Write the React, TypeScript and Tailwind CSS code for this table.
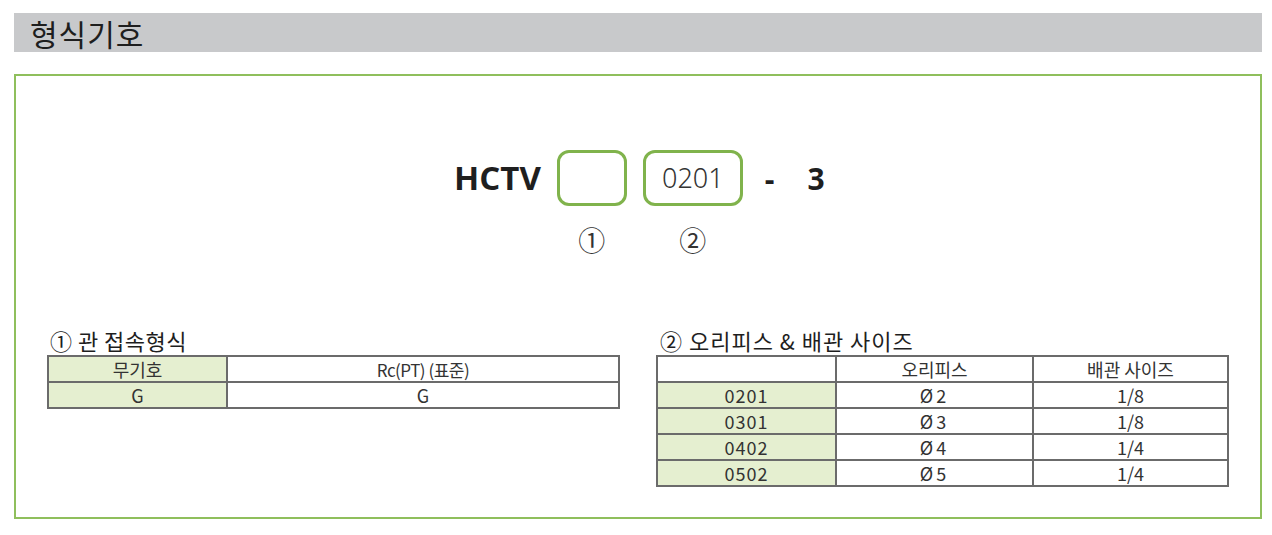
import React from "react";

const kr = { fontFamily: '"Noto Sans CJK KR", "Noto Sans", sans-serif' };

function Cell({ children, green, w, last }: { children: React.ReactNode; green?: boolean; w: string; last?: boolean }) {
  return (
    <div
      className={`${w} h-[26px] flex items-center justify-center border-b-2 ${last ? "" : "border-r-2"} border-[#6b6b6b] text-[18px] leading-none text-[#333] ${green ? "bg-[#e5efd0]" : "bg-white"}`}
    >
      {children}
    </div>
  );
}

export default function App() {
  const rows = [
    ["0201", "2", "1/8"],
    ["0301", "3", "1/8"],
    ["0402", "4", "1/4"],
    ["0502", "5", "1/4"],
  ];
  return (
    <div className="w-[1272px] h-[535px] bg-white pt-[13px]" style={kr}>
      <div className="ml-[14px] w-[1248px] h-[39px] bg-[#c8c9cb] flex items-center pl-[16px]">
        <span className="text-[30px] text-[#1e1e1e] leading-none tracking-[1px]">형식기호</span>
      </div>

      <div className="ml-[14px] w-[1248px] mt-[22px] h-[445px] border-2 border-[#8fbf5c] pt-[74px]">
        <div className="flex items-start pl-[438px]">
          <div className="h-[56px] flex items-center text-[33px] font-bold text-[#1f1f1f]" style={{ fontFamily: '"Open Sans", "Noto Sans", sans-serif' }}>
            HCTV
          </div>
          <div className="ml-[16px] flex flex-col items-center">
            <div className="w-[70px] h-[56px] rounded-[12px] border-[3px] border-[#80b34c]" />
            <div className="mt-[18px] text-[27px] leading-[32px] text-[#333]">①</div>
          </div>
          <div className="ml-[16px] flex flex-col items-center">
            <div className="w-[100px] h-[56px] rounded-[12px] border-[3px] border-[#80b34c] flex items-center justify-center text-[27px] text-[#333] font-light" style={{ fontFamily: '"Noto Sans", sans-serif' }}>
              0201
            </div>
            <div className="mt-[18px] text-[27px] leading-[32px] text-[#333]">②</div>
          </div>
          <div className="h-[56px] flex items-center ml-[22px] text-[30px] font-bold text-[#1f1f1f]" style={{ fontFamily: '"Open Sans", sans-serif' }}>
            -
          </div>
          <div className="h-[56px] flex items-center ml-[33px] text-[30px] font-bold text-[#1f1f1f]" style={{ fontFamily: '"Open Sans", sans-serif' }}>
            3
          </div>
        </div>

        <div className="flex mt-[70px] pl-[31px]">
          <div className="w-[573px]">
            <div className="pl-[3px] text-[22px] leading-[28px] text-[#1e1e1e] tracking-[0.5px]">① 관 접속형식</div>
            <div className="mt-[1px] border-t-2 border-l-2 border-r-2 border-[#6b6b6b] flex flex-wrap w-[573px]">
              <Cell w="w-[179px]" green>무기호</Cell>
              <Cell w="w-[390px]" last>
                <span className="text-[17px] tracking-[-0.5px]">Rc(PT) (표준)</span>
              </Cell>
              <Cell w="w-[179px]" green>G</Cell>
              <Cell w="w-[390px]" last>G</Cell>
            </div>
          </div>
          <div className="w-[573px] ml-[36px]">
            <div className="pl-[4px] text-[22px] leading-[28px] text-[#1e1e1e] tracking-[1px]">② 오리피스 &amp; 배관 사이즈</div>
            <div className="mt-[1px] border-t-2 border-l-2 border-r-2 border-[#6b6b6b] flex flex-wrap w-[573px]">
              <Cell w="w-[179px]"> </Cell>
              <Cell w="w-[197px]">오리피스</Cell>
              <Cell w="w-[193px]" last>배관 사이즈</Cell>
              {rows.map((r) => (
                <React.Fragment key={r[0]}>
                  <Cell w="w-[179px]" green>
                    <span className="tracking-[1px]">{r[0]}</span>
                  </Cell>
                  <Cell w="w-[197px]">
                    <span className="tracking-[3px]">Ø{r[1]}</span>
                  </Cell>
                  <Cell w="w-[193px]" last>{r[2]}</Cell>
                </React.Fragment>
              ))}
            </div>
          </div>
        </div>
      </div>
    </div>
  );
}
